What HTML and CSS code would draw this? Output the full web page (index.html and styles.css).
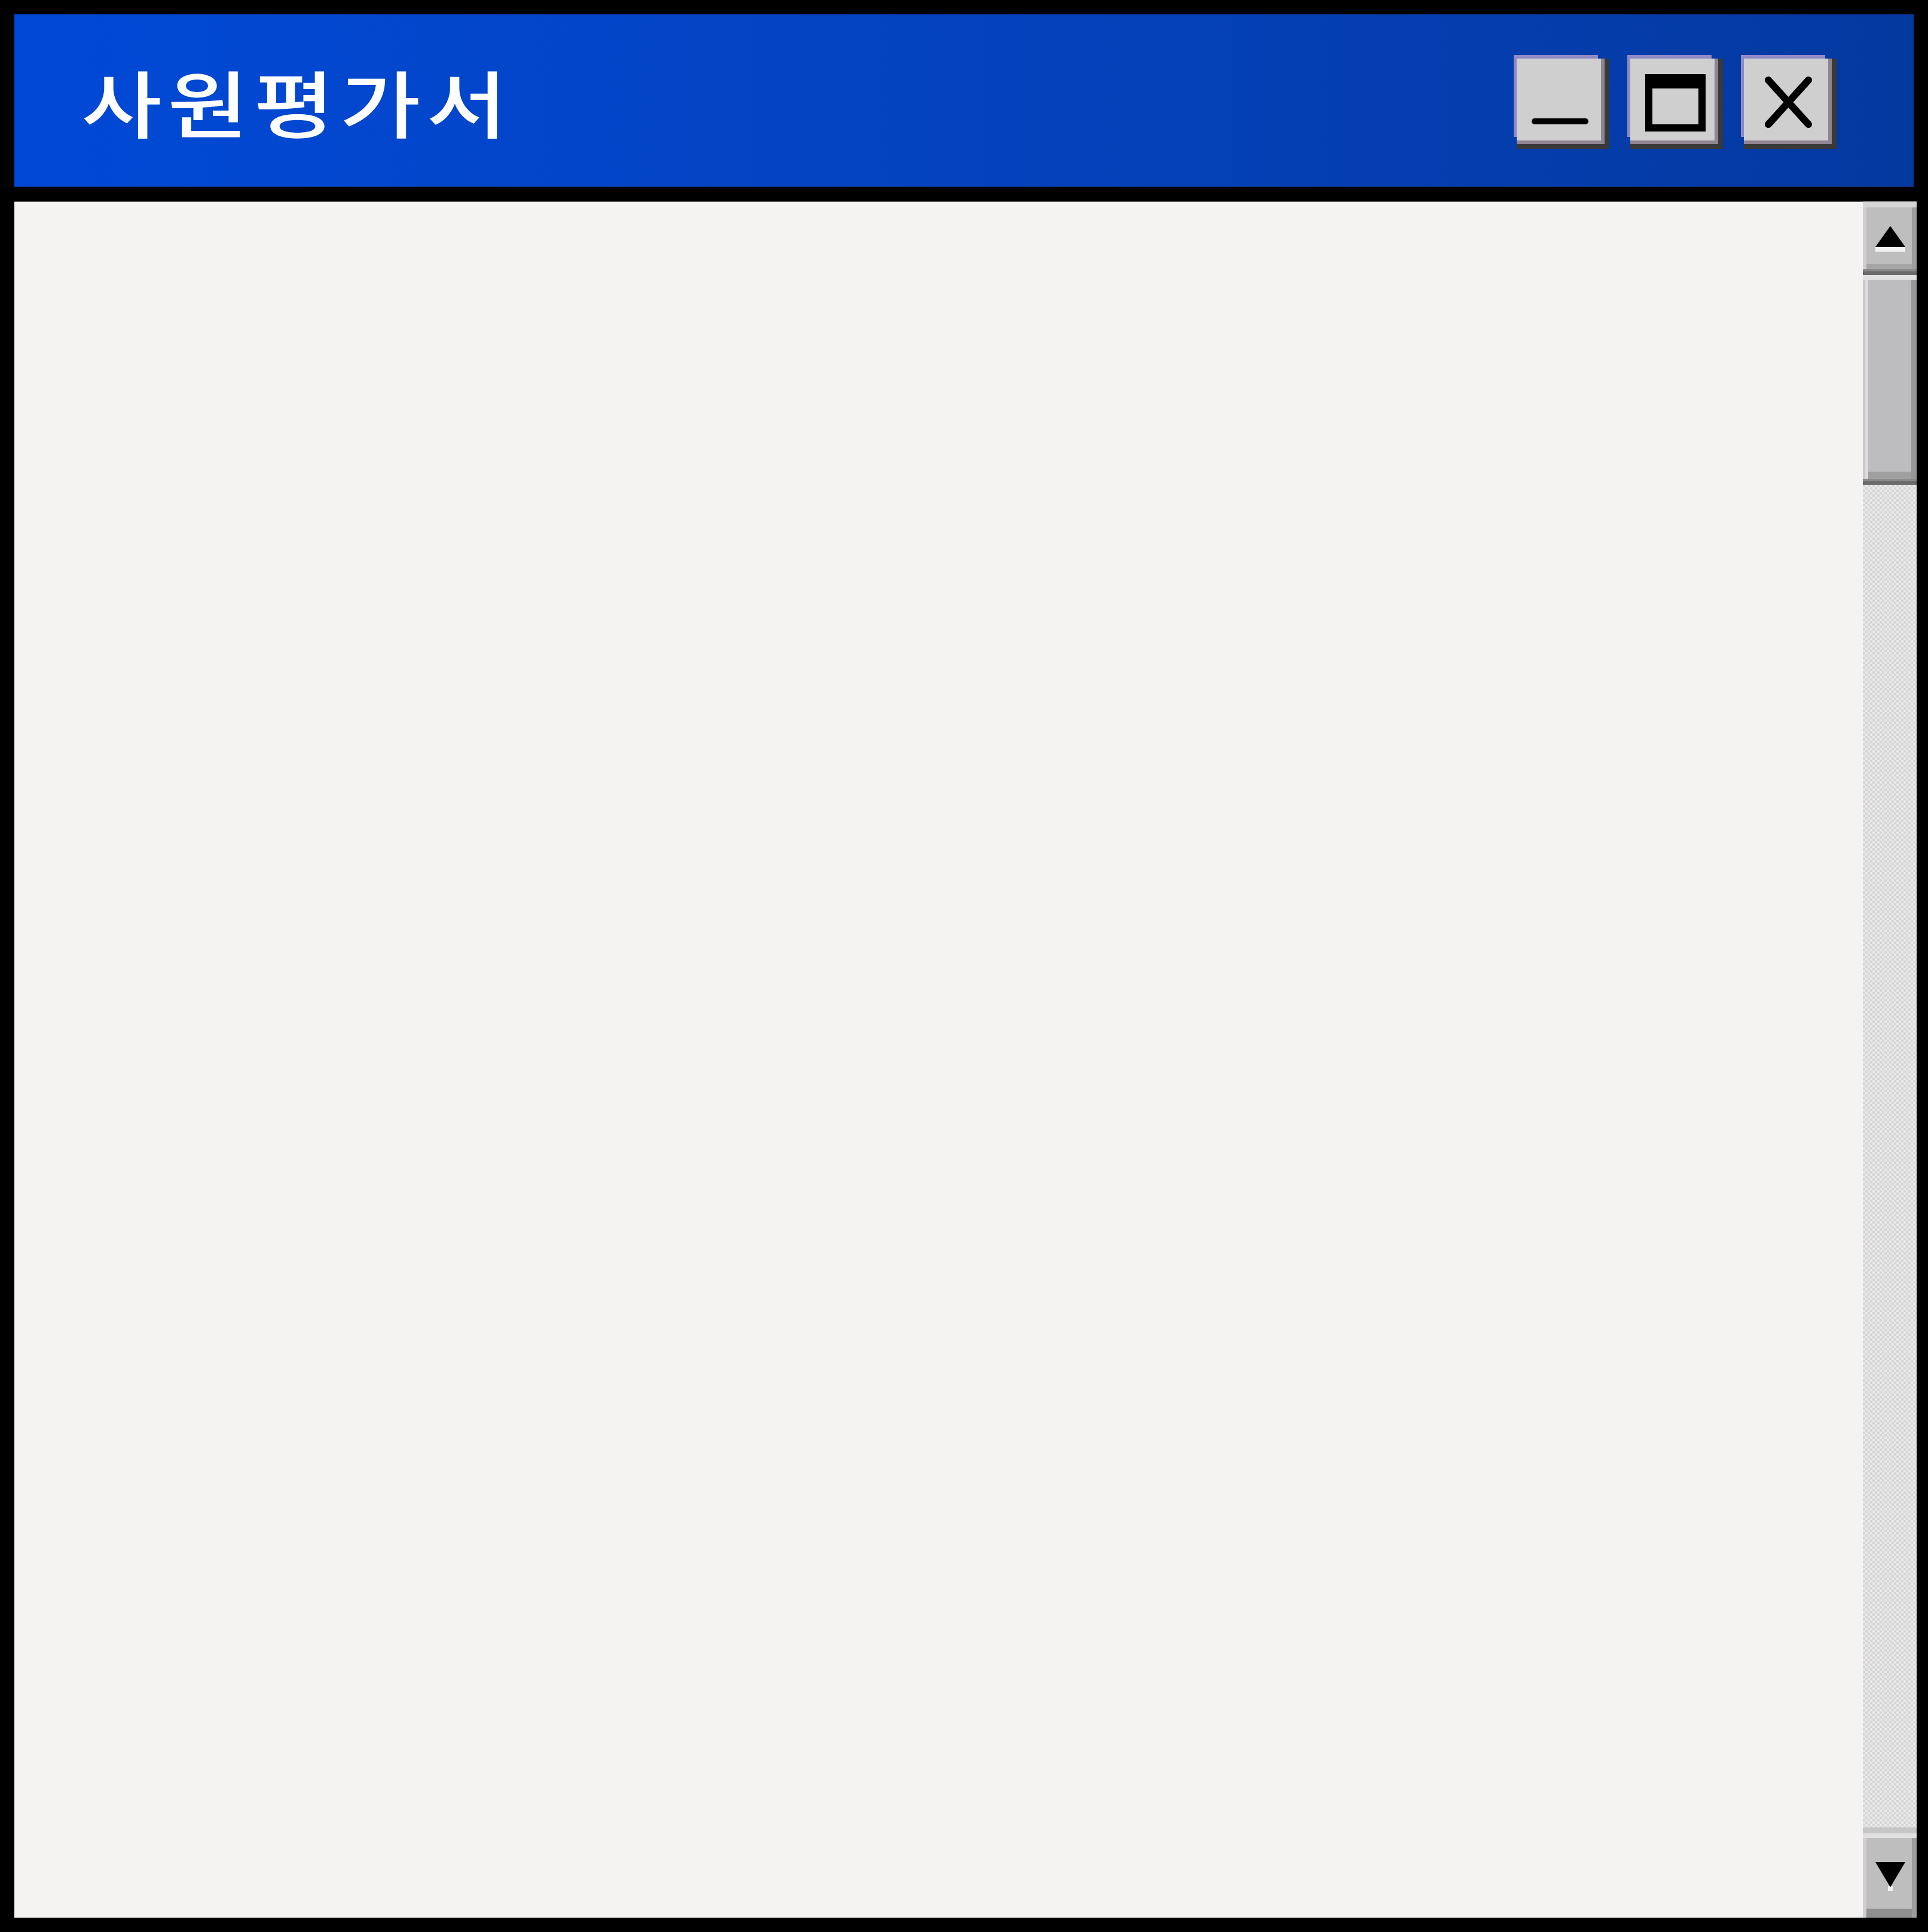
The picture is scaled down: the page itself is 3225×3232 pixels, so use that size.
FILE: index.html
```html
<!DOCTYPE html>
<html lang="ko">
<head>
<meta charset="utf-8">
<title>사원평가서</title>
<link rel="stylesheet" href="styles.css">
</head>
<body>
<div class="window">
  <div class="titlebar">
    <div class="title">사원평가서</div>
    <div class="controls">
      <div class="btn">
        <svg class="ico" width="141" height="137" viewBox="0 0 141 137"><line x1="30" y1="105" x2="115" y2="105" stroke="#000" stroke-width="10" stroke-linecap="round"/></svg>
      </div>
      <div class="btn">
        <svg class="ico" width="141" height="137" viewBox="0 0 141 137"><path d="M25 26H126V122H25Z M37 50V110H114V50Z" fill="#000" fill-rule="evenodd"/></svg>
      </div>
      <div class="btn">
        <svg class="ico" width="141" height="137" viewBox="0 0 141 137"><path d="M41 36L108 110M108 36L41 110" stroke="#000" stroke-width="12" stroke-linecap="round"/></svg>
      </div>
    </div>
  </div>
  <div class="body">
    <div class="content"></div>
    <div class="scrollbar">
      <div class="arrow up">
        <svg width="90" height="113" viewBox="0 0 90 113"><rect x="21" y="76" width="50" height="8" fill="#f2f2f2"/><path d="M46 41L71 76H21Z" fill="#000"/></svg>
      </div>
      <div class="sep"></div>
      <div class="thumb"></div>
      <div class="sep"></div>
      <div class="track"></div>
      <div class="arrow down">
        <svg width="90" height="151" viewBox="0 0 90 151"><rect x="42" y="98" width="8" height="8" fill="#f2f2f2"/><path d="M21 58H71L46 100Z" fill="#000"/></svg>
      </div>
    </div>
  </div>
</div>
</body>
</html>
```
FILE: styles.css
```css
html, body {
  margin: 0;
  padding: 0;
  background: #000;
}
.window {
  width: 3225px;
  height: 3232px;
  box-sizing: border-box;
  padding: 24px 19px 24px 24px;
  background: #000;
  display: flex;
  flex-direction: column;
  gap: 24px;
}
.titlebar {
  height: 289px;
  margin-right: 5px;
  box-sizing: border-box;
  border-bottom: 1px solid #1c2b5c;
  background: linear-gradient(90deg, #0049d6 0%, #0444c4 40%, #0439a0 100%);
  display: flex;
  align-items: center;
  justify-content: space-between;
  padding: 0 143px 0 112px;
}
.title {
  font-family: "Noto Sans CJK KR", "Noto Sans", sans-serif;
  font-size: 122px;
  font-weight: 500;
  line-height: 1;
  letter-spacing: 8px;
  color: #fff;
  transform: scaleX(1.2);
  transform-origin: left center;
}
.controls {
  display: flex;
  gap: 49px;
  margin-top: -3px;
}
.btn {
  width: 141px;
  height: 137px;
  background: #cfcfcf;
  box-shadow: 3px 3px 0 3px #8f8592, 7px 7px 0 7px #393939, -5px -6px 0 0 #8e8ac6;
}
.ico {
  display: block;
}
.body {
  flex: 1;
  display: flex;
  min-height: 0;
}
.content {
  flex: 1;
  background: #f4f3f1;
  border-top: 1px solid #8c8782;
}
.scrollbar {
  width: 90px;
  display: flex;
  flex-direction: column;
  background: #dcdcdc;
}
.arrow {
  background: #bebebe;
  box-sizing: border-box;
}
.arrow svg {
  display: block;
}
.up {
  height: 113px;
  box-shadow: inset 0 10px 0 #d6d6d6, inset 6px 0 0 #d0d0d0, inset -8px 0 0 #9e9e9e, inset 0 -8px 0 #a6a6a6;
}
.sep {
  height: 10px;
  background: linear-gradient(#8a8a8a 0 40%, #6b6b6b 40% 100%);
}
.thumb {
  height: 341px;
  background: #bdbcbf;
  box-shadow: inset 0 8px 0 #e2e2e2, inset 4px 0 0 #c9c9c9, inset 9px 0 0 #dcdcdc, inset -9px 0 0 #979699, inset 0 -12px 0 #a0a0a0;
}
.track {
  flex: 1;
  background-color: #dcdcdc;
  background-image: conic-gradient(#e9e9e9 25%, #d6d6d6 0 50%, #e9e9e9 0 75%, #d6d6d6 0);
  background-size: 8px 8px;
}
.down {
  height: 151px;
  box-shadow: inset 0 10px 0 #c6c6c6, inset 0 18px 0 #e0e0e0, inset 6px 0 0 #d0d0d0, inset -8px 0 0 #9e9e9e, inset 0 -15px 0 #8f8f8f;
}
```
